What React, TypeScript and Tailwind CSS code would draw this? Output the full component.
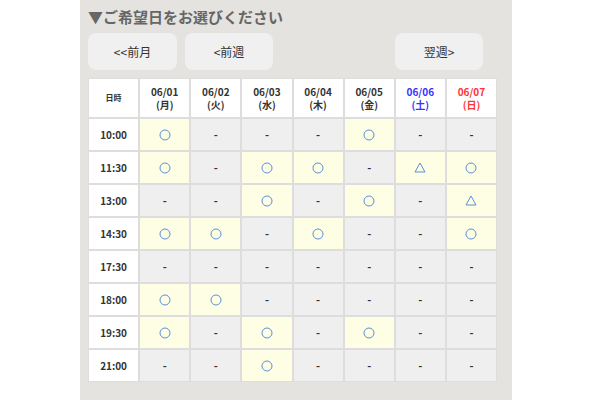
import React from 'react';

const days = [
  { d: '06/01', w: '月', c: 'text-[#333]' },
  { d: '06/02', w: '火', c: 'text-[#333]' },
  { d: '06/03', w: '水', c: 'text-[#333]' },
  { d: '06/04', w: '木', c: 'text-[#333]' },
  { d: '06/05', w: '金', c: 'text-[#333]' },
  { d: '06/06', w: '土', c: 'text-[#3333ff]' },
  { d: '06/07', w: '日', c: 'text-[#ff3333]' },
];

const rows: [string, string][] = [
  ['10:00', 'o---o--'],
  ['11:30', 'o-oo-to'],
  ['13:00', '--o-o-t'],
  ['14:30', 'oo-o--o'],
  ['17:30', '-------'],
  ['18:00', 'oo-----'],
  ['19:30', 'o-o-o--'],
  ['21:00', '--o----'],
];

const Mark = ({ v }: { v: string }) => {
  if (v === 'o')
    return (
      <svg width="12" height="12" viewBox="0 0 12 12">
        <circle cx="6" cy="6" r="5" fill="none" stroke="#5b8fd9" strokeWidth="1" />
      </svg>
    );
  if (v === 't')
    return (
      <svg width="12" height="11" viewBox="0 0 12 11">
        <path d="M6 1 L11 10 L1 10 Z" fill="none" stroke="#5b8fd9" strokeWidth="1" />
      </svg>
    );
  return <span className="text-[11px] font-bold text-[#333]">-</span>;
};

export default function App() {
  return (
    <div className="w-[600px] h-[400px] bg-white" style={{ fontFamily: '"Noto Sans CJK JP", "Liberation Sans", sans-serif' }}>
      <div className="ml-[80px] w-[432px] h-[400px] bg-[#e5e3df] px-[8px] pt-[6px]">
        <div className="text-[15px] font-bold text-[#666] leading-[22px]">▼ご希望日をお選びください</div>
        <div className="flex mt-[5px] h-[37px] text-[12px] text-[#333]">
          <button className="w-[89px] rounded-[8px] bg-[#f0f0f0]">&lt;&lt;前月</button>
          <button className="w-[88px] ml-[8px] rounded-[8px] bg-[#f0f0f0]">&lt;前週</button>
          <button className="w-[88px] ml-[122px] rounded-[8px] bg-[#f0f0f0]">翌週&gt;</button>
        </div>
        <div className="mt-[8px] w-[409px] grid grid-cols-[repeat(8,1fr)] gap-[2px] bg-[#dddddd] p-[1px] text-[10px] font-bold">
          <div className="bg-white h-[38px] flex items-center justify-center text-[8px] text-[#333]">日時</div>
          {days.map(x => (
            <div key={x.d} className={`bg-white h-[38px] flex flex-col items-center justify-center gap-[1px] ${x.c}`}>
              <span className="leading-[12px]">{x.d}</span>
              <span className="leading-[12px]">({x.w})</span>
            </div>
          ))}
          {rows.map(([t, s]) => (
            <React.Fragment key={t}>
              <div className="bg-white h-[31px] flex items-center justify-center text-[#333]">{t}</div>
              {s.split('').map((v, i) => (
                <div key={i} className={`h-[31px] flex items-center justify-center ${v === '-' ? 'bg-[#efefef]' : 'bg-[#fefee4]'}`}>
                  <Mark v={v} />
                </div>
              ))}
            </React.Fragment>
          ))}
        </div>
      </div>
    </div>
  );
}
